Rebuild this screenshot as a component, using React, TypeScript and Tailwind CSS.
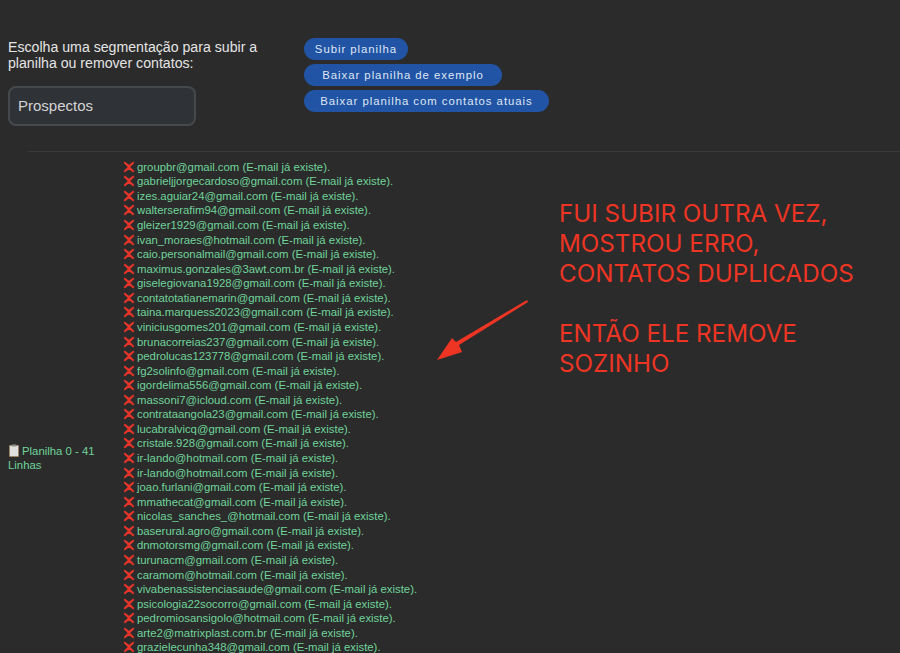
const rows = [
  "groupbr@gmail.com","gabrieljjorgecardoso@gmail.com","izes.aguiar24@gmail.com","walterserafim94@gmail.com","gleizer1929@gmail.com","ivan_moraes@hotmail.com","caio.personalmail@gmail.com","maximus.gonzales@3awt.com.br","giselegiovana1928@gmail.com","contatotatianemarin@gmail.com","taina.marquess2023@gmail.com","viniciusgomes201@gmail.com","brunacorreias237@gmail.com","pedrolucas123778@gmail.com","fg2solinfo@gmail.com","igordelima556@gmail.com","massoni7@icloud.com","contrataangola23@gmail.com","lucabralvicq@gmail.com","cristale.928@gmail.com","ir-lando@hotmail.com","ir-lando@hotmail.com","joao.furlani@gmail.com","mmathecat@gmail.com","nicolas_sanches_@hotmail.com","baserural.agro@gmail.com","dnmotorsmg@gmail.com","turunacm@gmail.com","caramom@hotmail.com","vivabenassistenciasaude@gmail.com","psicologia22socorro@gmail.com","pedromiosansigolo@hotmail.com","arte2@matrixplast.com.br","grazielecunha348@gmail.com",
];

function Cross() {
  return (
    <svg width="12" height="12" viewBox="0 0 12 12" className="shrink-0 mr-[2px] -mt-[1px]">
      <path d="M1.2 1.2 L6 5 L10.8 1.2 M1.2 10.8 L6 7 L10.8 10.8 M1.8 1.8 L10.2 10.2 M10.2 1.8 L1.8 10.2" fill="none" stroke="#e5352a" strokeWidth="1.8" />
    </svg>
  );
}

function Clipboard() {
  return (
    <svg width="12" height="13" viewBox="0 0 12 13" className="inline-block align-[-2px] mr-[2px]">
      <rect x="1" y="1" width="10" height="12" rx="1" fill="#9a8468" />
      <rect x="2" y="2" width="8" height="10" fill="#dfe0dd" />
      <rect x="3.5" y="0.5" width="5" height="2" rx="0.5" fill="#8d8d8d" />
    </svg>
  );
}

function Btn({ label, w }: { label: string; w: string }) {
  return (
    <button className={`h-[22px] ${w} rounded-full bg-[#2154a5] pt-px text-[#dfe6f2] text-[11.4px] tracking-[0.95px] text-center`}>
      {label}
    </button>
  );
}

export default function App() {
  return (
    <div className="relative h-[653px] w-[900px] overflow-hidden bg-[#2b2b2b] font-['Liberation_Sans',Arial,sans-serif]">
      <div className="flex h-[151px]">
        <div className="w-[304px] pl-2 pt-[39px] shrink-0">
          <p className="text-[14.15px] leading-[16px] text-[#e4e4e4] w-[270px]">
            Escolha uma segmentação para subir a planilha ou remover contatos:
          </p>
          <div className="mt-[15px] flex h-[40px] w-[188px] items-center rounded-lg border-2 border-[#46494c] bg-[#2f3236] pl-[8px] text-[15px] text-[#d4d4d4]">
            Prospectos
          </div>
        </div>
        <div className="flex flex-col items-start gap-[4px] pt-[38px]">
          <Btn label="Subir planilha" w="w-[104px]" />
          <Btn label="Baixar planilha de exemplo" w="w-[198px]" />
          <Btn label="Baixar planilha com contatos atuais" w="w-[245px]" />
        </div>
      </div>
      <div className="ml-[28px] h-px bg-[#3b3b3b]" />
      <div className="flex items-center">
        <div className="w-[123px] shrink-0 pl-2 pr-2 text-[11.35px] leading-[14.5px] text-[#6fd49a]">
          <Clipboard />Planilha 0 - 41 Linhas
        </div>
        <ul className="pt-[8px] pb-[109px]">
          {rows.map((r, i) => (
            <li key={i} className="flex items-center h-[14.57px] text-[11.35px] text-[#6fd49a] whitespace-nowrap">
              <Cross />
              {r} (E-mail já existe).
            </li>
          ))}
        </ul>
      </div>
      <div className="absolute left-[559px] top-[199px] font-['Inter',sans-serif] text-[24.2px] leading-[30px] text-[#ee3524] whitespace-nowrap">
        FUI SUBIR OUTRA VEZ,<br />MOSTROU ERRO,<br />CONTATOS DUPLICADOS<br /><br />ENTÃO ELE REMOVE<br />SOZINHO
      </div>
      <svg className="absolute left-[430px] top-[295px]" width="105" height="70" viewBox="0 0 105 70">
        <path d="M97 5 L98 7 L29 50 L32 57 L7 65 L22 43 L26 47 Z" fill="#ee3524" />
      </svg>
    </div>
  );
}
